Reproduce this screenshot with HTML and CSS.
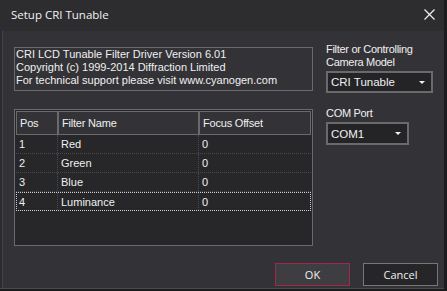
FILE: index.html
```html
<!DOCTYPE html>
<html>
<head>
<meta charset="utf-8">
<link rel="stylesheet" href="styles.css">
</head>
<body>
<div class="window">
  <div class="titlebar">
    <span class="title">Setup CRI Tunable</span>
    <svg class="close" width="11" height="11" viewBox="0 0 11 11"><path d="M0.5 0.5 L10.5 10.5 M10.5 0.5 L0.5 10.5" stroke="#f0f0f0" stroke-width="1.2" fill="none"/></svg>
  </div>
  <div class="content">
    <div class="main">
      <div class="left">
        <div class="info">
          <div>CRI LCD Tunable Filter Driver Version 6.01</div>
          <div>Copyright (c) 1999-2014 Diffraction Limited</div>
          <div>For technical support please visit www.cyanogen.com</div>
        </div>
        <div class="table">
          <div class="thead">
            <div class="th c1">Pos</div>
            <div class="th c2">Filter Name</div>
            <div class="th c3">Focus Offset</div>
          </div>
          <div class="tr"><div class="td c1">1</div><div class="td c2">Red</div><div class="td c3">0</div></div>
          <div class="tr"><div class="td c1">2</div><div class="td c2">Green</div><div class="td c3">0</div></div>
          <div class="tr"><div class="td c1">3</div><div class="td c2">Blue</div><div class="td c3">0</div></div>
          <div class="tr focus"><div class="td c1">4</div><div class="td c2">Luminance</div><div class="td c3">0</div></div>
        </div>
      </div>
      <div class="right">
        <div class="label">Filter or Controlling<br>Camera Model</div>
        <div class="combo wide"><span class="val">CRI Tunable</span><span class="arrow"></span></div>
        <div class="label com">COM Port</div>
        <div class="combo narrow"><span class="val">COM1</span><span class="arrow"></span></div>
      </div>
    </div>
    <div class="footer">
      <div class="btn ok">OK</div>
      <div class="btn cancel">Cancel</div>
    </div>
  </div>
</div>
</body>
</html>
```
FILE: styles.css
```css
html, body {
  margin: 0;
  padding: 0;
  background: #1c1c1e;
  width: 447px;
  height: 291px;
  overflow: hidden;
}
.window {
  width: 444px;
  height: 288px;
  background: #2b2b2d;
  display: flex;
  flex-direction: column;
  border-bottom: 1px solid #4a4a4c;
  font-family: "Liberation Sans", Arial, sans-serif;
  font-size: 11px;
  color: #f0f0f0;
}
.titlebar {
  height: 31px;
  flex: none;
  display: flex;
  align-items: center;
  justify-content: space-between;
  background: #2d2d2f;
  padding: 0 9px 0 11px;
}
.title {
  font-family: "Open Sans", "Noto Sans", sans-serif;
  font-size: 11.5px;
  color: #f2f2f2;
  margin-top: -2px;
}
.close {
  margin-top: -2px;
}
.content {
  flex: 1;
  margin-left: 2px;
  border-left: 1px solid #444446;
  background: #333337;
  display: flex;
  flex-direction: column;
  padding: 11px 10px 0 11px;
}
.main {
  display: flex;
  gap: 13px;
}
.left {
  width: 299px;
  display: flex;
  flex-direction: column;
}
.info {
  margin-top: 5px;
  border: 1px solid #6a6a6c;
  padding: 0 0 3px 1px;
  line-height: 13px;
  height: 39px;
}
.table {
  margin-top: 18px;
  height: 133px;
  border: 1px solid #6a6a6c;
  background: #272729;
  padding: 1px;
}
.thead {
  display: flex;
  height: 24px;
  background: #333337;
}
.th {
  border: 1px solid #6a6a6c;
  line-height: 22px;
  padding-left: 3px;
  box-sizing: border-box;
  letter-spacing: -0.2px;
}
.c1 { width: 42px; }
.c2 { width: 141px; }
.c3 { flex: 1; }
.tr {
  display: flex;
  height: 19px;
  line-height: 18px;
  border-bottom: 1px dotted #4a4a4c;
  box-sizing: border-box;
}
.td {
  padding-left: 3px;
  box-sizing: border-box;
  border-right: 1px dotted #4a4a4c;
}
.td.c3 { border-right: none; }
.tr.focus {
  border: 1px dotted #d0d0d0;
}
.tr.focus .td.c1 { padding-left: 2px; width: 41px; }
.right {
  width: 107px;
  display: flex;
  flex-direction: column;
  margin-top: 1px;
}
.label {
  line-height: 13px;
  font-size: 11px;
  letter-spacing: -0.3px;
}
.label.com {
  margin-top: 14px;
}
.combo {
  margin-top: 2px;
  height: 22px;
  box-sizing: border-box;
  border: 2px solid #6a6a6c;
  background: #242426;
  display: flex;
  align-items: center;
  justify-content: space-between;
  padding: 0 6px 0 3px;
  font-size: 11.5px;
}
.combo.narrow {
  width: 83px;
  height: 23px;
}
.arrow {
  width: 0;
  height: 0;
  border-left: 3px solid transparent;
  border-right: 3px solid transparent;
  border-top: 3px solid #f0f0f0;
}
.footer {
  margin-top: 17px;
  display: flex;
  justify-content: flex-end;
  gap: 13px;
  margin-right: -4px;
}
.btn {
  width: 75px;
  height: 23px;
  box-sizing: border-box;
  display: flex;
  align-items: center;
  justify-content: center;
  font-family: "Open Sans", "Noto Sans", sans-serif;
  font-size: 11px;
}
.ok {
  background: #3e3e42;
  border: 1px solid #9e2a45;
}
.cancel {
  background: #262628;
  border: 1px solid #77777a;
}
```
